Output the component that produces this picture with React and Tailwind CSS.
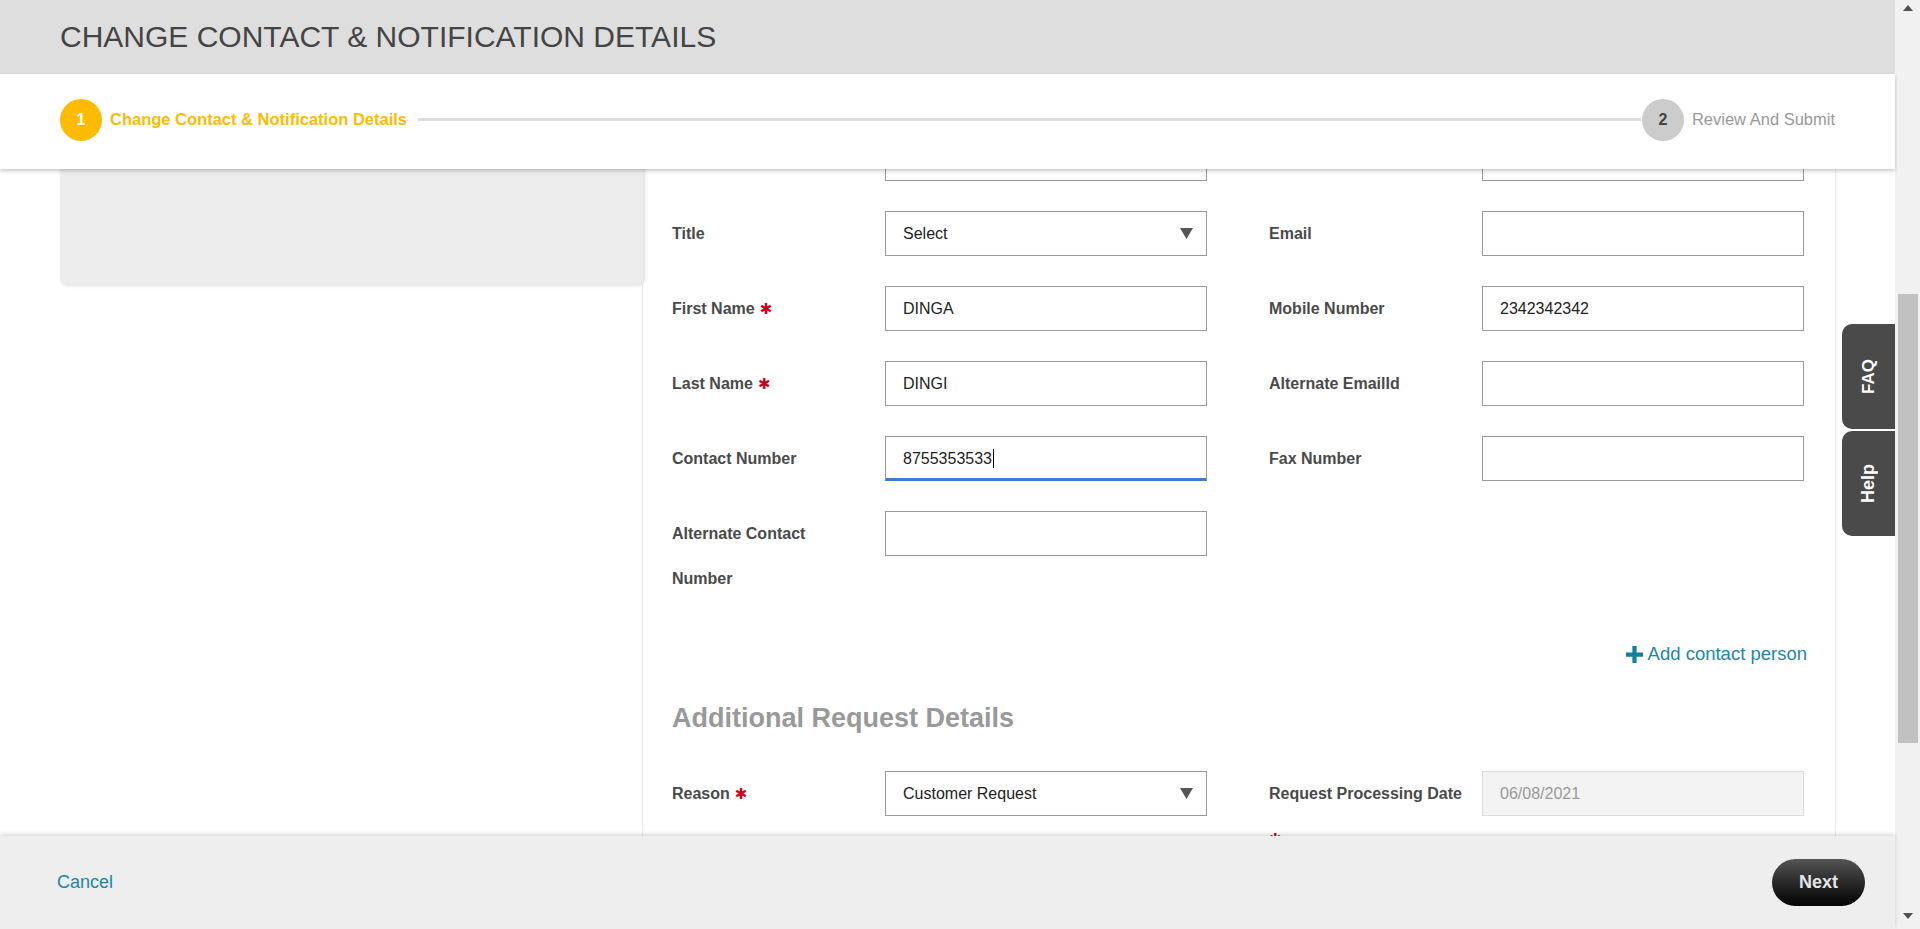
import React from "react";

// red required marker shown after labels
const Req = () => (
  <span className="ml-[5px] font-['DejaVu_Sans',sans-serif] text-[15px] leading-none text-[#d0021b]">✱</span>
);

const Arrow = () => (
  <svg width="13" height="11" viewBox="0 0 13 11">
    <polygon points="0,0 13,0 6.5,11" fill="#555555" />
  </svg>
);

function Box({ value, select, focused, disabled }) {
  let cls =
    "flex h-[45px] w-[322px] shrink-0 items-center justify-between border pl-[17px] pr-[13px] text-[16px]";
  if (disabled) cls += " border-[#dcdcdc] bg-[#f3f3f3] text-[#999999]";
  else cls += " border-[#9a9a9a] bg-white text-[#222222]";
  if (focused) cls += " border-b-[3px] border-b-[#3b7bd6] pt-[2px]";

  return (
    <div className={cls}>
      <span className="flex items-center">
        {value}
        {focused && <span className="ml-[1px] inline-block h-[19px] w-px bg-black" />}
      </span>
      {select && <Arrow />}
    </div>
  );
}

function Field({ label, required, ...box }) {
  return (
    <div className="flex items-start">
      <div className="w-[213px] shrink-0 pr-[12px] text-[16px] font-bold leading-[45px] text-[#4a4a4a]">
        {label}
        {required && <Req />}
      </div>
      <Box {...box} />
    </div>
  );
}

function SideTab({ children, size }) {
  return (
    <div className="flex h-[105px] w-[53px] items-center justify-center rounded-l-[10px] bg-[#4a4a4a]">
      <span className={`rotate-180 font-bold text-white [writing-mode:vertical-rl] ${size}`}>
        {children}
      </span>
    </div>
  );
}

export default function App() {
  return (
    <div className="flex h-screen w-full overflow-hidden bg-white font-['Liberation_Sans',Arial,sans-serif]">
      <div className="relative flex min-w-0 flex-1 flex-col">
        <header className="flex h-[74px] shrink-0 items-center bg-[#dedede] pl-[60px]">
          <h1 className="text-[30px] leading-none text-[#444444]">
            CHANGE CONTACT &amp; NOTIFICATION DETAILS
          </h1>
        </header>

        {/* stepper */}
        <div className="relative z-10 flex h-[95px] shrink-0 items-center bg-white px-[60px] pb-[4px] shadow-[0_2px_4px_rgba(0,0,0,0.22)]">
          <div className="flex h-[42px] w-[42px] items-center justify-center rounded-full bg-[#ffbb00] text-[16px] font-bold text-white">
            1
          </div>
          <span className="ml-[8px] text-[16.5px] font-bold text-[#ffbb00]">
            Change Contact &amp; Notification Details
          </span>
          <div className="ml-[11px] mr-[1px] h-[3px] flex-1 bg-[#dddddd]" />
          <div className="flex h-[42px] w-[42px] items-center justify-center rounded-full bg-[#cccccc] text-[16px] font-bold text-[#444444]">
            2
          </div>
          <span className="ml-[8px] text-[16.5px] text-[#999999]">Review And Submit</span>
        </div>

        <main className="flex min-h-0 flex-1 flex-col overflow-hidden">
          <div className="-mt-[33px] flex shrink-0">
            <aside className="w-[642px] shrink-0 pl-[60px]">
              <div className="h-[149px] rounded-b-[6px] bg-[#ededed] shadow-[2px_0_4px_rgba(0,0,0,0.18)]" />
            </aside>

            <section className="w-[1194px] shrink-0 border-x border-x-[#ececec] pb-[40px] pl-[29px] pr-[28px]">
              <div className="grid grid-cols-[535px_535px] gap-x-[62px] gap-y-[30px]">
                <Field label="" value="" />
                <Field label="" value="" />
                <Field label="Title" value="Select" select />
                <Field label="Email" value="" />
                <Field label="First Name" required value="DINGA" />
                <Field label="Mobile Number" value="2342342342" />
                <Field label="Last Name" required value="DINGI" />
                <Field label="Alternate EmailId" value="" />
                <Field label="Contact Number" value="8755353533" focused />
                <Field label="Fax Number" value="" />
                <Field
                  label={
                    <>
                      Alternate Contact
                      <br />
                      Number
                    </>
                  }
                  value=""
                />
                <div />
              </div>

              <div className="mt-[41px] flex justify-end">
                <a className="flex items-center text-[18.5px] leading-[24px] text-[#1b87a7]">
                  <svg width="17" height="17" viewBox="0 0 16 16" className="mr-[5px]">
                    <path d="M6 0h4v6h6v4h-6v6H6v-6H0V6h6z" fill="#137fa0" />
                  </svg>
                  Add contact person
                </a>
              </div>

              <h2 className="mt-[36px] text-[27px] font-bold leading-[32px] text-[#999999]">
                Additional Request Details
              </h2>

              <div className="mt-[37px] grid grid-cols-[535px_535px] gap-x-[62px]">
                <Field label="Reason" required value="Customer Request" select />
                <Field
                  label={
                    <>
                      Request Processing Date
                      <br />
                      <span className="-ml-[5px]">
                        <Req />
                      </span>
                    </>
                  }
                  value="06/08/2021"
                  disabled
                />
              </div>
            </section>
          </div>
        </main>

        <footer className="relative z-10 flex h-[93px] shrink-0 items-center justify-between bg-[#eeeeee] pl-[57px] pr-[30px] shadow-[0_-2px_4px_rgba(0,0,0,0.15)]">
          <a className="text-[18px] text-[#1b87a7]">Cancel</a>
          <button className="h-[47px] w-[93px] rounded-full bg-gradient-to-b from-[#555555] to-[#050505] text-[18px] font-bold text-[#e5e5e5]">
            Next
          </button>
        </footer>

        {/* FAQ / Help tabs */}
        <div className="absolute right-0 top-[324px] z-20 flex flex-col gap-[2px]">
          <SideTab size="text-[17px]">FAQ</SideTab>
          <SideTab size="text-[18px]">Help</SideTab>
        </div>
      </div>

      {/* scrollbar */}
      <div className="flex w-[25px] shrink-0 flex-col items-center bg-[#f1f1f1]">
        <div className="flex h-[16px] items-center">
          <svg width="10" height="6" viewBox="0 0 10 6">
            <polygon points="0,6 10,6 5,0" fill="#505050" />
          </svg>
        </div>
        <div className="mt-[278px] h-[449px] w-[20px] bg-[#c1c1c1]" />
        <div className="flex-1" />
        <div className="flex h-[26px] items-center">
          <svg width="10" height="6" viewBox="0 0 10 6">
            <polygon points="0,0 10,0 5,6" fill="#505050" />
          </svg>
        </div>
      </div>
    </div>
  );
}
